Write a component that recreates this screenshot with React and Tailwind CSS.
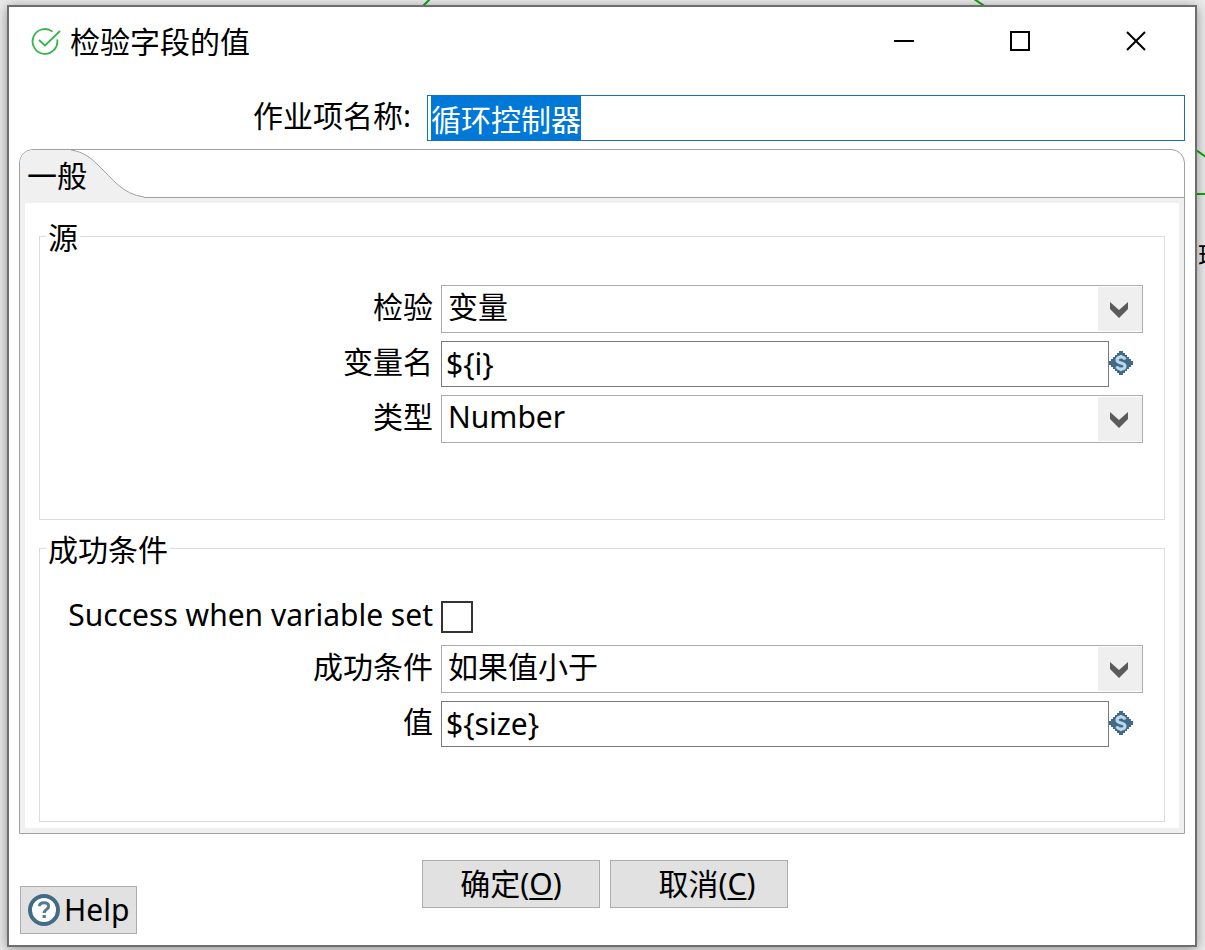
import { useEffect, useRef, useState } from 'react'

const CHECK_OPTIONS = ['变量', '字段']
const TYPE_OPTIONS = ['Number', 'String', 'Boolean', 'Date time']
const CONDITION_OPTIONS = ['如果值小于', '如果值等于', '如果值大于']

const FONT = "font-['Noto_Sans','Noto_Sans_CJK_SC',sans-serif]"

// the job diagram that shows round the edges of the dialog
function Canvas() {
  return (
    <div aria-hidden="true" className="absolute inset-0 overflow-hidden">
      <svg width="1205" height="300" viewBox="0 0 1205 300" fill="none" stroke="#12a312" strokeWidth="2">
        <path d="M430 -1L422 7M974 -1L986 7M1190 146L1206 157M1190 194H1206" />
      </svg>
      <span className="absolute top-[237px] left-[1173px] text-[25px] leading-9 whitespace-nowrap">循环</span>
    </div>
  )
}

function SuccessIcon() {
  return (
    <svg width="30" height="30" viewBox="0 0 30 30" fill="none" stroke="#35b54a" strokeWidth="1.8">
      <path d="M21.5 4.6A12.4 12.4 0 1 0 26.2 12.4" />
      <path d="M8 13L14 18.5L29 4" />
    </svg>
  )
}

function VariableIcon() {
  return (
    <svg width="24" height="24" viewBox="0 0 24 24" className="mb-[2px] shrink-0">
      <path
        d="M10 0H14V2H16V4H18V6H20V8H22V10H24V14H22V16H20V18H18V20H16V22H14V24H10V22H8V20H6V18H4V16H2V14H0V10H2V8H4V6H6V4H8V2H10Z"
        fill="#426b88"
      />
      <path
        d="M16 8.5C15.5 6.8 14 6 12 6C9.6 6 8 7.2 8 9C8 13 16 11 16 15C16 16.9 14.4 18 12 18C9.8 18 8.3 17.2 7.8 15.4"
        fill="none"
        stroke="#bcd8ec"
        strokeWidth="3"
      />
      <path d="M12 4V7M12 17V20" stroke="#bcd8ec" strokeWidth="2" />
    </svg>
  )
}

function HelpIcon() {
  return (
    <svg width="32" height="32" viewBox="0 0 32 32" fill="none">
      <circle cx="16" cy="16" r="14" fill="#fff" stroke="#426b88" strokeWidth="4" />
      <path
        d="M11.5 12.2C11.5 9.8 13.4 8.8 16 8.8C18.8 8.8 20.6 10.2 20.6 12.4C20.6 15.4 16.2 15.4 16.2 19"
        stroke="#56798f"
        strokeWidth="3"
      />
      <path d="M14.6 21H17.8V24H14.6Z" fill="#56798f" />
    </svg>
  )
}

function Row({ id, label, children }) {
  return (
    <div className="flex items-center">
      <label htmlFor={id} className="w-[401px] shrink-0 pr-2 pb-1 text-right">
        {label}
      </label>
      {children}
    </div>
  )
}

function Combo({ id, options }) {
  return (
    <div className="relative mr-[21px] h-12 flex-1">
      <select
        id={id}
        className="h-full w-full appearance-none border border-[#adadad] bg-white pr-12 pb-1 pl-[6px] outline-none"
      >
        {options.map((option) => (
          <option key={option}>{option}</option>
        ))}
      </select>
      <span className="pointer-events-none absolute inset-y-[2px] right-[1px] grid w-11 place-items-center bg-[#efefef] pt-[2px] pr-[2px]">
        <svg width="18" height="16" viewBox="0 0 18 16">
          <path d="M0 0L9 8L18 0V7L9 16L0 7Z" fill="#5b5b5b" />
        </svg>
      </span>
    </div>
  )
}

function VariableInput({ id, value, onChange }) {
  return (
    <div className="mr-[31px] flex flex-1 items-center">
      <input
        id={id}
        value={value}
        onChange={(e) => onChange(e.target.value)}
        className="h-[46px] w-full min-w-0 border border-[#7a7a7a] bg-white pb-[2px] pl-1 outline-none"
      />
      <VariableIcon />
    </div>
  )
}

export default function App() {
  const nameRef = useRef(null)
  const [name, setName] = useState('循环控制器')
  const [variable, setVariable] = useState('${i}')
  const [value, setValue] = useState('${size}')

  useEffect(() => {
    nameRef.current.focus()
    nameRef.current.select()
  }, [])

  return (
    <div className={`relative flex min-h-screen flex-col overflow-hidden bg-[#ececec] pt-[5px] pr-2 pb-[3px] pl-[7px] text-[30px] leading-9 text-black ${FONT}`}>
      <Canvas />

      <main className="relative flex flex-1 flex-col border-2 border-[#6e6e6e] bg-white shadow-[0_2px_12px_rgba(0,0,0,0.4)]">
        <header className="flex h-[70px] items-center pr-[1px] pl-[22px]">
          <SuccessIcon />
          <h1 className="flex-1 pl-[9px]">检验字段的值</h1>
          <button type="button" aria-label="最小化" className="grid h-full w-29 place-items-center pb-[2px]">
            <svg width="20" height="20" viewBox="0 0 20 20" stroke="#000" strokeWidth="2">
              <path d="M0 10H20" />
            </svg>
          </button>
          <button type="button" aria-label="最大化" className="grid h-full w-29 place-items-center pb-[2px]">
            <svg width="20" height="20" viewBox="0 0 20 20" fill="none" stroke="#000" strokeWidth="2">
              <path d="M1 1H19V19H1Z" />
            </svg>
          </button>
          <button type="button" aria-label="关闭" className="grid h-full w-29 place-items-center pb-[2px]">
            <svg width="20" height="20" viewBox="0 0 20 20" stroke="#000" strokeWidth="2">
              <path d="M1 1L19 19M19 1L1 19" />
            </svg>
          </button>
        </header>

        <div className="mt-[18px] flex items-center px-[10px]">
          <label htmlFor="entry-name" className="w-[408px] shrink-0 pr-4 pb-1 text-right">
            作业项名称:
          </label>
          <input
            id="entry-name"
            ref={nameRef}
            value={name}
            onChange={(e) => setName(e.target.value)}
            className="h-[46px] min-w-0 flex-1 border border-[#1a6fb5] bg-white pt-[2px] pb-[3px] pl-[3px] outline-none selection:bg-[#0078d7] selection:text-white"
          />
        </div>

        <section className="mx-[10px] mt-2 flex flex-1 flex-col rounded-t-[14px] border border-[#a0a0a0]">
          <div role="tablist" className="flex h-12 border-b border-[#a0a0a0]">
            <button type="button" role="tab" aria-selected="true" className="relative w-31 pt-1 pl-[7px] text-left">
              <svg width="124" height="48" viewBox="0 0 124 48" className="absolute top-0 left-0">
                <path d="M0 48V13Q1 1 13 0H51C64 2 71 8 79 16C93 29 102 44 124 47V48Z" fill="#f0f0f0" />
                <path d="M51 0C64 2 71 8 79 16C93 29 102 44 124 47" fill="none" stroke="#a0a0a0" />
              </svg>
              <span className="relative">一般</span>
            </button>
          </div>

          <div role="tabpanel" className="flex flex-1 flex-col gap-2 border-[5px] border-[#f0f0f0] px-[14px] pt-[13px] pb-[6px]">
            <fieldset className="min-h-[304px] border border-[#dcdcdc]">
              <legend className="ml-[6px] px-[2px] pt-1">源</legend>
              <div className="flex flex-col gap-2 pt-[29px]">
                <Row id="check" label="检验">
                  <Combo id="check" options={CHECK_OPTIONS} />
                </Row>
                <Row id="variable" label="变量名">
                  <VariableInput id="variable" value={variable} onChange={setVariable} />
                </Row>
                <Row id="type" label="类型">
                  <Combo id="type" options={TYPE_OPTIONS} />
                </Row>
              </div>
            </fieldset>

            <fieldset className="flex-1 border border-[#dcdcdc]">
              <legend className="ml-[6px] px-[2px] pt-1">成功条件</legend>
              <div className="flex flex-col gap-2 pt-[29px]">
                <Row id="when-set" label="Success when variable set">
                  <input
                    id="when-set"
                    type="checkbox"
                    className="h-8 w-8 appearance-none border-2 border-[#333] bg-white checked:bg-[#333]"
                  />
                </Row>
                <Row id="condition" label="成功条件">
                  <Combo id="condition" options={CONDITION_OPTIONS} />
                </Row>
                <Row id="value" label="值">
                  <VariableInput id="value" value={value} onChange={setValue} />
                </Row>
              </div>
            </fieldset>
          </div>
        </section>

        <footer className="mt-[26px] mb-[11px] grid h-[74px] grid-cols-[1fr_auto_1fr] pr-[5px] pl-[11px]">
          <button
            type="button"
            className="flex h-12 items-center gap-1 self-end justify-self-start border border-[#adadad] bg-[#e1e1e1] px-[7px]"
          >
            <HelpIcon />
            Help
          </button>
          <div className="flex gap-[10px]">
            <button type="button" className="h-12 w-[178px] border border-[#adadad] bg-[#e1e1e1]">
              确定(<u className="decoration-2 underline-offset-3">O</u>)
            </button>
            <button type="button" className="h-12 w-[178px] border border-[#adadad] bg-[#e1e1e1] pl-4">
              取消(<u className="decoration-2 underline-offset-3">C</u>)
            </button>
          </div>
        </footer>
      </main>
    </div>
  )
}
